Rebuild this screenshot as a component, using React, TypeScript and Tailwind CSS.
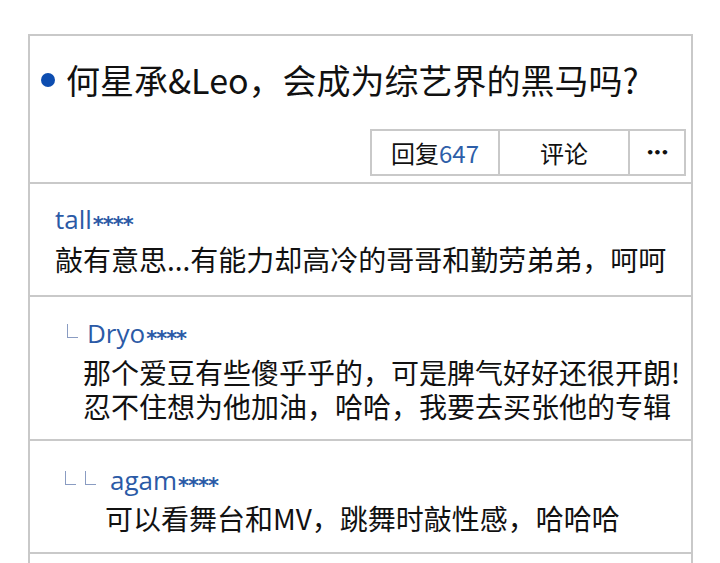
import React from "react";

const font = { fontFamily: '"Noto Sans CJK SC", "Noto Sans", sans-serif' };
const latin = { fontFamily: '"Open Sans", "Noto Sans CJK SC", sans-serif' };
const star = { fontFamily: '"DejaVu Sans", sans-serif' };

const Corner = () => (
  <span className="inline-block w-[11px] h-[14px] border-l border-b border-[#8a9cc2] mr-[9px] mb-[6px] shrink-0" />
);

const Name = ({ name, depth }: { name: string; depth: number }) => (
  <div className="flex items-center h-[30px] text-[26px] leading-[30px] text-[#2b5aa6]" style={latin}>
    {Array.from({ length: depth }).map((_, i) => (
      <Corner key={i} />
    ))}
    <span className={depth > 1 ? "ml-[5px]" : ""}>
      {name}
      <span className="inline-block text-[21px] font-bold translate-y-[3px] ml-[1px] tracking-[-1px]" style={star}>
        ****
      </span>
    </span>
  </div>
);

const App = () => {
  return (
    <div className="min-h-screen bg-white pt-[34px] pl-[28px] pr-[27px]" style={font}>
      <div className="border-2 border-b-0 border-[#c9c9c9] h-[540px]">
        {/* header */}
        <div className="border-b-2 border-[#c9c9c9] pt-[23px] pb-[6px] pr-[5px]">
          <h1 className="flex items-center text-[34px] leading-[42px] text-[#111] font-normal">
            <span className="w-[14px] h-[14px] rounded-full bg-[#0d4db0] ml-[11px] mr-[11px] shrink-0" />
            何星承&amp;Leo，会成为综艺界的黑马吗?
          </h1>
          <div className="flex justify-end mt-[28px]">
            <div className="flex border-2 border-[#c9c9c9] h-[47px] text-[24px] text-[#111]">
              <button className="w-[126px] flex items-center justify-center">
                回复<span className="text-[#2d5ea8]">647</span>
              </button>
              <button className="w-[130px] flex items-center justify-center border-l-2 border-[#c9c9c9]">
                评论
              </button>
              <button className="w-[56px] flex items-center justify-center border-l-2 border-[#c9c9c9] text-[13px] font-bold tracking-[-1px]" style={star}>
                •••
              </button>
            </div>
          </div>
        </div>

        {/* comments */}
        <div className="border-b-2 border-[#c9c9c9] pt-[21px] pb-[19px] pl-[25px]">
          <Name name="tall" depth={0} />
          <p className="mt-[7px] text-[28px] leading-[34px] text-[#111]">
            敲有意思...有能力却高冷的哥哥和勤劳弟弟，呵呵
          </p>
        </div>

        <div className="border-b-2 border-[#c9c9c9] pt-[22px] pb-[16px] pl-[37px]">
          <Name name="Dryo" depth={1} />
          <div className="mt-[6px] pl-[16px] text-[28px] leading-[34px] text-[#111] whitespace-nowrap">
            <p>那个爱豆有些傻乎乎的，可是脾气好好还很开朗!</p>
            <p>忍不住想为他加油，哈哈，我要去买张他的专辑</p>
          </div>
        </div>

        <div className="border-b-2 border-[#c9c9c9] pt-[25px] pb-[17px] pl-[35px]">
          <Name name="agam" depth={2} />
          <p className="mt-[5px] pl-[40px] text-[28px] leading-[34px] text-[#111]">
            可以看舞台和MV，跳舞时敲性感，哈哈哈
          </p>
        </div>
      </div>
    </div>
  );
};

export default App;
